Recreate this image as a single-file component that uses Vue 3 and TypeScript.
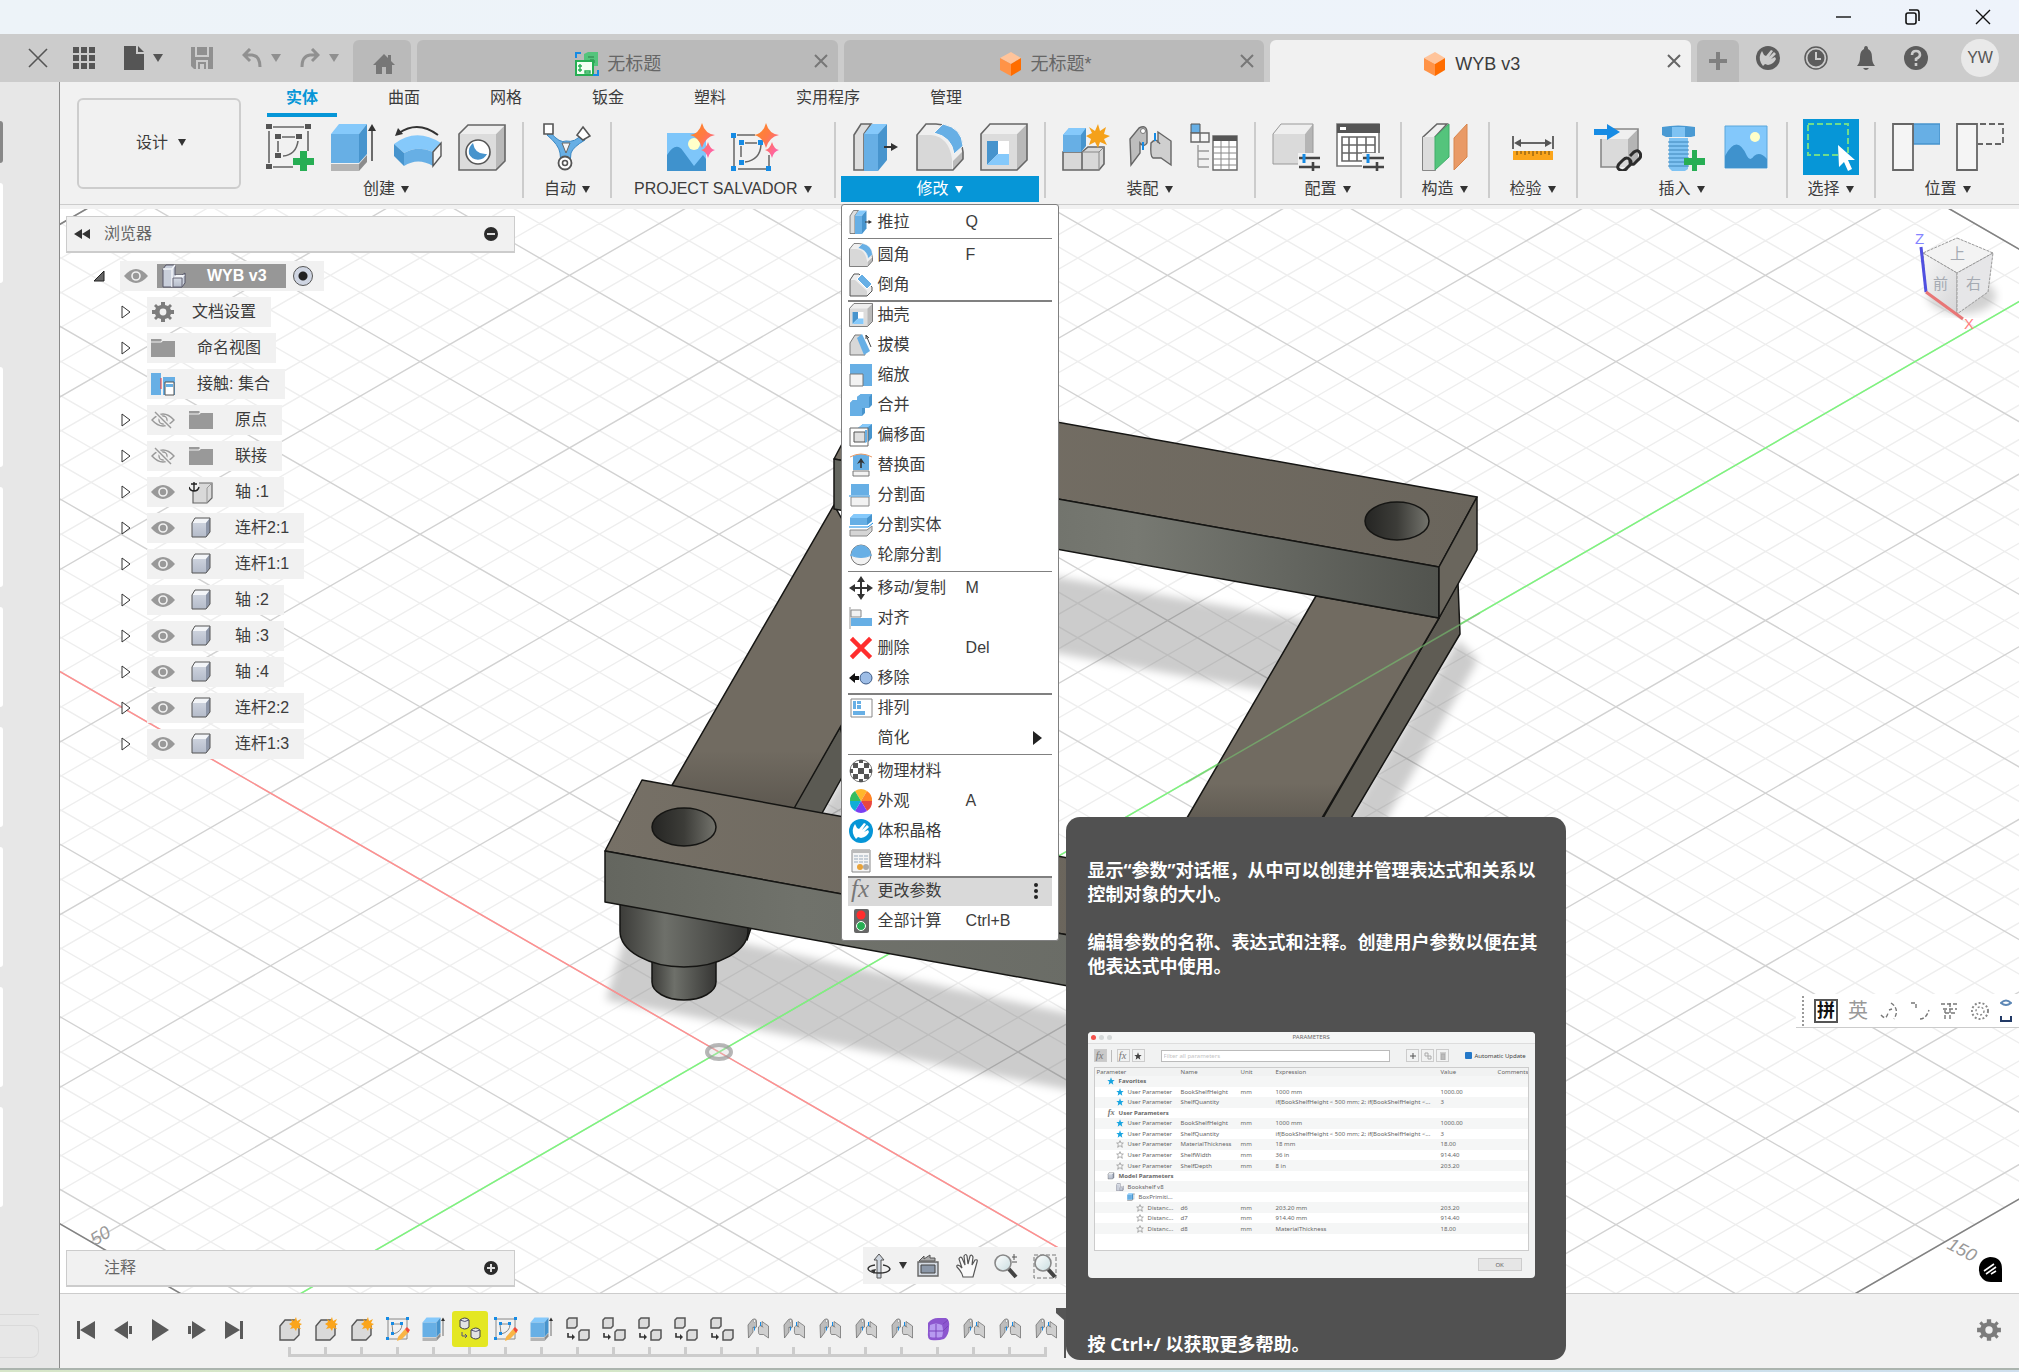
<script setup lang="ts">
interface Group { label: string; icons: string[]; active?: boolean; picked?: boolean; roomy?: boolean }
interface MenuItem { label: string; icon?: string; key?: string; rule?: 'thin' | 'thick'; more?: boolean; sub?: boolean; hot?: boolean }
interface Node { label: string; icon: string; eye?: 'on' | 'off'; leaf?: boolean }
interface Param { kind: string; level: number; mark: string; name?: string; unit?: string; expr?: string; value?: string; head?: boolean }

const tabs = ['实体', '曲面', '网格', '钣金', '塑料', '实用程序', '管理']

const groups: Group[] = [
  { label: '创建', icons: ['sketch', 'extrude', 'revolve', 'hole'] },
  { label: '自动', icons: ['auto'] },
  { label: 'PROJECT SALVADOR', icons: ['aiimage', 'aisketch'], roomy: true },
  { label: '修改', icons: ['presspull', 'fillet', 'shell'], active: true },
  { label: '装配', icons: ['component', 'joint', 'bom'] },
  { label: '配置', icons: ['config', 'configtable'] },
  { label: '构造', icons: ['plane'] },
  { label: '检验', icons: ['measure'] },
  { label: '插入', icons: ['derive', 'bolt', 'image'] },
  { label: '选择', icons: ['select'], picked: true },
  { label: '位置', icons: ['capture', 'revert'] },
]

const menu: MenuItem[] = [
  { label: '推拉', icon: 'presspull', key: 'Q' },
  { label: '圆角', icon: 'fillet', key: 'F', rule: 'thin' },
  { label: '倒角', icon: 'chamfer' },
  { label: '抽壳', icon: 'shell', rule: 'thick' },
  { label: '拔模', icon: 'draft' },
  { label: '缩放', icon: 'scale' },
  { label: '合并', icon: 'combine' },
  { label: '偏移面', icon: 'offset' },
  { label: '替换面', icon: 'replace' },
  { label: '分割面', icon: 'splitface' },
  { label: '分割实体', icon: 'splitbody' },
  { label: '轮廓分割', icon: 'silhouette' },
  { label: '移动/复制', icon: 'move', key: 'M', rule: 'thin' },
  { label: '对齐', icon: 'align' },
  { label: '删除', icon: 'delete', key: 'Del' },
  { label: '移除', icon: 'remove' },
  { label: '排列', icon: 'arrange', rule: 'thick' },
  { label: '简化', sub: true },
  { label: '物理材料', icon: 'material', rule: 'thin' },
  { label: '外观', icon: 'appearance', key: 'A' },
  { label: '体积晶格', icon: 'lattice' },
  { label: '管理材料', icon: 'manage' },
  { label: '更改参数', icon: 'fx', rule: 'thick', more: true, hot: true },
  { label: '全部计算', icon: 'compute', key: 'Ctrl+B' },
]

const nodes: Node[] = [
  { label: '文档设置', icon: 'gear' },
  { label: '命名视图', icon: 'folder' },
  { label: '接触: 集合', icon: 'contact', leaf: true },
  { label: '原点', icon: 'folder', eye: 'off' },
  { label: '联接', icon: 'folder', eye: 'off' },
  { label: '轴 :1', icon: 'anchor', eye: 'on' },
  { label: '连杆2:1', icon: 'body', eye: 'on' },
  { label: '连杆1:1', icon: 'body', eye: 'on' },
  { label: '轴 :2', icon: 'body', eye: 'on' },
  { label: '轴 :3', icon: 'body', eye: 'on' },
  { label: '轴 :4', icon: 'body', eye: 'on' },
  { label: '连杆2:2', icon: 'body', eye: 'on' },
  { label: '连杆1:3', icon: 'body', eye: 'on' },
]

const steps = [
  'newcomp', 'newcomp', 'newcomp', 'editsketch', 'extrude', 'copybody', 'editsketch', 'extrude',
  'paste', 'paste', 'paste', 'paste', 'paste',
  'joint', 'joint', 'joint', 'joint', 'joint', 'form', 'joint', 'joint', 'joint',
]

const longExpr = 'if(BookShelfHeight < 500 mm; 2; if(BookShelfHeight <...'
const params: Param[] = [
  { kind: 'Favorites', level: 0, mark: 'star', head: true },
  { kind: 'User Parameter', level: 1, mark: 'star', name: 'BookShelfHeight', unit: 'mm', expr: '1000 mm', value: '1000.00' },
  { kind: 'User Parameter', level: 1, mark: 'star', name: 'ShelfQuantity', expr: longExpr, value: '3' },
  { kind: 'User Parameters', level: 0, mark: 'fx', head: true },
  { kind: 'User Parameter', level: 1, mark: 'star', name: 'BookShelfHeight', unit: 'mm', expr: '1000 mm', value: '1000.00' },
  { kind: 'User Parameter', level: 1, mark: 'star', name: 'ShelfQuantity', expr: longExpr, value: '3' },
  { kind: 'User Parameter', level: 1, mark: 'staroff', name: 'MaterialThickness', unit: 'mm', expr: '18 mm', value: '18.00' },
  { kind: 'User Parameter', level: 1, mark: 'staroff', name: 'ShelfWidth', unit: 'mm', expr: '36 in', value: '914.40' },
  { kind: 'User Parameter', level: 1, mark: 'staroff', name: 'ShelfDepth', unit: 'mm', expr: '8 in', value: '203.20' },
  { kind: 'Model Parameters', level: 0, mark: 'body', head: true },
  { kind: 'Bookshelf v8', level: 1, mark: 'assembly' },
  { kind: 'BoxPrimiti...', level: 2, mark: 'extrude' },
  { kind: 'Distanc...', level: 3, mark: 'staroff', name: 'd6', unit: 'mm', expr: '203.20 mm', value: '203.20' },
  { kind: 'Distanc...', level: 3, mark: 'staroff', name: 'd7', unit: 'mm', expr: '914.40 mm', value: '914.40' },
  { kind: 'Distanc...', level: 3, mark: 'staroff', name: 'd8', unit: 'mm', expr: 'MaterialThickness', value: '18.00' },
]

// Isometric ground grid: i and j count minor cells away from the origin.
const gx = (i: number, j: number): string => (719 + 29.9 * (i - j)).toFixed(1)
const gy = (i: number, j: number): string => (1052 + 17.26 * (i + j)).toFixed(1)
const iMin = -35, iMax = 26, jMin = -45, jMax = 16
const seg = (i1: number, j1: number, i2: number, j2: number): string =>
  `M${gx(i1, j1)} ${gy(i1, j1)}L${gx(i2, j2)} ${gy(i2, j2)}`
let minor = ''
let major = ''
for (let i = iMin; i <= iMax; i++) {
  if (i % 5 === 0) major += seg(i, jMin, i, jMax)
  else minor += seg(i, jMin, i, jMax)
}
for (let j = jMin; j <= jMax; j++) {
  if (j % 5 === 0) major += seg(iMin, j, iMax, j)
  else minor += seg(iMin, j, iMax, j)
}
const border = seg(iMin, jMin, iMax, jMin) + seg(iMax, jMin, iMax, jMax) + seg(iMax, jMax, iMin, jMax) + seg(iMin, jMax, iMin, jMin)
const xAxis = seg(iMin, 0, iMax, 0)
const yAxis = seg(0, jMin, 0, jMax)
</script>

<template>
  <svg class="sprite" aria-hidden="true">
    <defs>
      <linearGradient id="gBody" x1="0" y1="0" x2="0" y2="1"><stop offset="0" stop-color="#d5dae4" /><stop offset="1" stop-color="#b4bbc9" /></linearGradient>
      <linearGradient id="gSpark" x1="0" y1="0" x2="1" y2="1"><stop offset="0" stop-color="#ff8a1f" /><stop offset=".45" stop-color="#ff7a45" /><stop offset="1" stop-color="#ff5bc8" /></linearGradient>
      <linearGradient id="gGlass" x1="0" y1="0" x2="1" y2="1"><stop offset="0" stop-color="#fff" /><stop offset="1" stop-color="#c9dde0" /></linearGradient>

      <symbol id="sketch" viewBox="0 0 48 48">
        <path d="M7 4H38M3 8V40M42 8V28M7 44H27M16 14H29M12 18V29M32 18Q30 32 17 33" fill="none" stroke="#666" stroke-width="1.6" />
        <path d="M0 1H6V6H0ZM39 1H45V6H39ZM0 41H6V46H0ZM9 11H15V16H9ZM30 11H36V16H30ZM9 30H15V35H9Z" fill="#555" />
        <path d="M34 28H41V35H48V42H41V48H34V42H27V35H34Z" fill="#27ae54" />
      </symbol>
      <symbol id="extrude" viewBox="0 0 48 48">
        <path d="M1 41H29V48H1Z" fill="#b4b4b4" /><path d="M29 41L37 32V39L29 48Z" fill="#8c8c8c" />
        <path d="M1 11L9 1H37L29 11Z" fill="#85c9fb" /><path d="M1 11H29V40H1Z" fill="#67afe5" /><path d="M29 11L37 1V31L29 40Z" fill="#4794cd" />
        <path d="M42 6V38" stroke="#333" stroke-width="1.4" /><path d="M42 1L46 8H38Z" fill="#333" />
      </symbol>
      <symbol id="revolve" viewBox="0 0 48 48">
        <path d="M0 21Q22 4 47 20L39 29Q24 22 10 30Z" fill="#85c9fb" /><path d="M10 30Q24 22 39 29V43Q24 34 10 43Z" fill="#67afe5" />
        <path d="M0 21L10 30V43L0 33Z" fill="#4794cd" /><path d="M39 29L47 20V33L39 43Z" fill="#f5f5f5" stroke="#555" stroke-width="1.4" />
        <path d="M5 10Q24 -3 44 12" fill="none" stroke="#333" stroke-width="2" /><path d="M1 13L4 5L9 11Z" fill="#333" />
      </symbol>
      <symbol id="hole" viewBox="0 0 48 48">
        <path d="M1 11L10 2H47V38L38 47H1Z" fill="#dcdcdc" /><path d="M38 11L47 2V38L38 47Z" fill="#b9b9b9" /><path d="M1 11L10 2H47L38 11Z" fill="#efefef" />
        <path d="M1 11L10 2H47V38L38 47H1Z" fill="none" stroke="#666" stroke-width="1.6" /><circle cx="20" cy="29" r="12" fill="#fff" stroke="#555" stroke-width="1.6" />
        <path d="M15 20Q17 32 29 31A10 10 0 0 1 11 31Q10 24 15 20Z" fill="#4794cd" />
      </symbol>
      <symbol id="auto" viewBox="0 0 48 48">
        <path d="M7 9Q17 21 23 18Q32 20 39 11L42 17Q30 24 28 30L27 40H18L17 30Q16 22 4 12Z" fill="#67afe5" stroke="#3a88c4" /><path d="M19 20H27L23 30Z" fill="#f5f5f5" stroke="#666" />
        <path d="M1 1H10V11H1Z" fill="#fff" stroke="#555" stroke-width="1.6" /><path d="M40 4L47 13L40 17L34 12Z" fill="#fff" stroke="#555" stroke-width="1.6" />
        <circle cx="22" cy="40" r="6.5" fill="#fff" stroke="#555" stroke-width="1.8" /><circle cx="22" cy="40" r="2.5" fill="none" stroke="#555" stroke-width="1.6" />
      </symbol>
      <symbol id="aiimage" viewBox="0 0 48 48">
        <path d="M0 10H39V48H0Z" fill="#7ec6fa" /><path d="M0 32Q9 18 16 28L27 43L36 32L39 36V48H0Z" fill="#3f92cd" /><circle cx="27" cy="21" r="6" fill="#ffffc9" />
        <path d="M35 0Q38 11 48 12Q38 14 35 25Q32 14 23 12Q32 11 35 0ZM41 19Q43 26 48 27Q43 28 41 35Q39 28 34 27Q39 26 41 19Z" fill="url(#gSpark)" />
      </symbol>
      <symbol id="aisketch" viewBox="0 0 48 48">
        <path d="M6 12H24M3 15V43M38 32V43M7 46H35M14 20H26M10 23V34M30 22Q29 37 14 39" fill="none" stroke="#666" stroke-width="1.5" />
        <path d="M0 10H5V15H0ZM8 17H13V22H8ZM27 17H32V22H27ZM8 37H13V42H8ZM0 43H5V48H0ZM35 43H40V48H35Z" fill="#168be4" />
        <path d="M35 0Q38 11 48 12Q38 14 35 25Q32 14 23 12Q32 11 35 0ZM41 19Q43 26 48 27Q43 28 41 35Q39 28 34 27Q39 26 41 19Z" fill="url(#gSpark)" />
      </symbol>
      <symbol id="presspull" viewBox="0 0 48 48">
        <path d="M2 12L9 1H19L12 11V47H2Z" fill="#dedede" stroke="#666" stroke-width="1.6" /><path d="M12 11L20 1H35L26 11Z" fill="#85c9fb" /><path d="M12 11H26V48H12Z" fill="#67afe5" /><path d="M26 11L35 1V37L26 48Z" fill="#4794cd" />
        <path d="M32 24H41" stroke="#333" stroke-width="2" /><path d="M39 20L46 24L39 28Z" fill="#333" />
      </symbol>
      <symbol id="fillet" viewBox="0 0 48 48">
        <path d="M1 12L10 1H20Q44 2 47 29V36L37 47H1Z" fill="#efefef" /><path d="M1 12H15Q33 14 36 36V47H1Z" fill="#d8d8d8" /><path d="M37 38L47 28V36L37 47Z" fill="#bbb" />
        <path d="M1 12L10 1H20Q44 2 47 29V36L37 47H1Z" fill="none" stroke="#666" stroke-width="1.6" /><path d="M27 1Q46 5 47 23L38 31Q36 14 18 10Z" fill="#67afe5" stroke="#f5f5f5" />
      </symbol>
      <symbol id="shell" viewBox="0 0 48 48">
        <path d="M1 11L10 1H47V37L37 47H1Z" fill="#dcdcdc" /><path d="M37 11L47 1V37L37 47Z" fill="#b9b9b9" /><path d="M1 11L10 1H47L37 11Z" fill="#efefef" />
        <path d="M1 11L10 1H47V37L37 47H1Z" fill="none" stroke="#666" stroke-width="1.6" /><path d="M7 18H29V42H7Z" fill="#fff" /><path d="M7 18H18V31L7 42Z" fill="#4794cd" /><path d="M7 42L18 31H29V42Z" fill="#85c9fb" />
      </symbol>
      <symbol id="component" viewBox="0 0 48 48">
        <path d="M1 29H20V47H1ZM20 29L26 24H42V41L37 47H20Z" fill="#d8d8d8" stroke="#666" stroke-width="1.6" /><path d="M20 29H37V47M37 29L42 24" fill="none" stroke="#888" />
        <path d="M1 12L7 5H24V22L19 29H1Z" fill="#67afe5" /><path d="M1 12L7 5H24L19 12Z" fill="#85c9fb" /><path d="M19 12L24 5V23L19 29Z" fill="#4794cd" />
        <path d="M36 1L38 8L44 4L42 11L48 13L42 16L45 22L38 19L36 25L33 19L27 22L29 16L24 13L30 10L27 4L33 8Z" fill="#f5a11a" />
      </symbol>
      <symbol id="joint" viewBox="0 0 48 48">
        <path d="M4 16L13 5Q21 1 21 10V20Q18 25 14 20V30L5 42Z" fill="#bdbdbd" stroke="#666" stroke-width="1.4" /><path d="M32 20V9L45 18V42L35 35H27Q24 34 25 20Q30 14 34 21" fill="#cfcfcf" stroke="#666" stroke-width="1.4" />
        <circle cx="17" cy="8" r="2.5" fill="#fff" stroke="#777" /><path d="M17 19V27M29 10V18" stroke="#168be4" stroke-width="2" />
      </symbol>
      <symbol id="bom" viewBox="0 0 48 48">
        <path d="M1 1H10V10H1Z" fill="#67afe5" stroke="#555" /><path d="M1 10H10V19H1ZM10 10H19V19H10Z" fill="#f5f5f5" stroke="#666" stroke-width="1.4" /><path d="M8 22V44M8 28H19M8 36H19M8 44H19" fill="none" stroke="#999" stroke-width="1.4" />
        <path d="M23 13H47V47H23Z" fill="#fff" stroke="#666" stroke-width="1.4" /><path d="M23 13H47V18H23Z" fill="#555" /><path d="M23 24H47M23 30H47M23 36H47M23 42H47M31 18V47M39 18V47" stroke="#888" />
      </symbol>
      <symbol id="config" viewBox="0 0 48 48">
        <path d="M1 11L9 1H41V32L33 41H1Z" fill="#dadada" /><path d="M33 11L41 1V32L33 41Z" fill="#b5b5b5" /><path d="M1 11L9 1H41L33 11Z" fill="#efefef" /><path d="M1 11L9 1H41V32L33 41H1Z" fill="none" stroke="#999" />
        <path d="M26 30H48V48H26Z" fill="#f1f1f1" /><path d="M27 35H48M27 44H48M41 39V48" stroke="#444" stroke-width="2.6" /><path d="M32 31V40" stroke="#168be4" stroke-width="3" />
      </symbol>
      <symbol id="configtable" viewBox="0 0 48 48">
        <path d="M1 1H43V43H1Z" fill="#fff" stroke="#777" stroke-width="1.6" /><path d="M1 1H44V10H1Z" fill="#555" /><path d="M4 4H10V7H4Z" fill="#fff" /><path d="M6 14H39V38H6ZM6 22H39M6 30H39M13 14V38M21 14V38M30 14V38" fill="none" stroke="#666" stroke-width="1.6" />
        <path d="M26 30H48V48H26Z" fill="#f1f1f1" /><path d="M27 35H48M27 44H48M41 39V48" stroke="#444" stroke-width="2.6" /><path d="M32 31V40" stroke="#168be4" stroke-width="3" />
      </symbol>
      <symbol id="plane" viewBox="0 0 48 48">
        <path d="M2 14L16 1H26L14 14V47H2Z" fill="#f0f0f0" stroke="#666" stroke-width="1.6" /><path d="M2 14H14V47H2Z" fill="#dcdcdc" /><path d="M14 14L28 1V34L14 47Z" fill="#54c47c" stroke="#3fae68" /><path d="M33 15L46 1V34L33 47Z" fill="#e99a66" stroke="#d8864e" />
      </symbol>
      <symbol id="measure" viewBox="0 0 48 48">
        <path d="M4 13V26M44 13V26M8 20H40" stroke="#666" stroke-width="2" /><path d="M5 20L12 16V24ZM43 20L36 16V24Z" fill="#555" /><path d="M4 28H44V37H4Z" fill="#fba51b" />
        <path d="M8 28V32M12 28V31M16 28V32M20 28V31M24 28V33M28 28V31M32 28V32M36 28V31M40 28V32" stroke="#6b4a10" />
      </symbol>
      <symbol id="derive" viewBox="0 0 48 48">
        <path d="M7 16L16 6H44V37L34 44H7Z" fill="#dadada" /><path d="M34 16L44 6V37L34 44Z" fill="#b5b5b5" /><path d="M7 16L16 6H44L34 16Z" fill="#efefef" /><path d="M7 16V44H24M18 6H44V28" fill="none" stroke="#888" stroke-width="1.6" />
        <path d="M0 6H13V1L26 9L13 17V12H0Z" fill="#168be4" /><path d="M36 33L40 29Q44 26 46 30Q48 34 44 37L40 41Q36 42 36 38M36 37Q33 33 29 37L25 41Q22 45 26 47Q30 49 33 45L36 42Q38 38 36 37" fill="none" stroke="#2c2c2c" stroke-width="3" />
      </symbol>
      <symbol id="bolt" viewBox="0 0 48 48">
        <path d="M4 4Q20 1 37 4V13L33 14H8L4 12Z" fill="#4a9ad3" /><path d="M14 4H27V14H14Z" fill="#7fc3f3" /><path d="M11 15H30V46L27 48H14L11 45Z" fill="#7fc3f3" /><path d="M10 19H31M10 23H31M10 27H31M10 31H31M10 35H31M10 39H31M10 43H31" stroke="#3f86ba" />
        <path d="M34 27H39V35H47V42H39V49H34V42H26V35H34Z" fill="#27ae54" />
      </symbol>
      <symbol id="image" viewBox="0 0 48 48">
        <path d="M3 3H45V45H3Z" fill="#83c8fb" stroke="#5aa6db" /><path d="M3 33Q15 10 25 33Q28 39 32 33Q38 28 45 36V45H3Z" fill="#3f92cd" /><circle cx="33" cy="14" r="5" fill="#ffffc9" />
      </symbol>
      <symbol id="select" viewBox="0 0 48 48">
        <path d="M1 1H41V32H1Z" fill="none" stroke="#6fdc8c" stroke-width="2" stroke-dasharray="6 3" /><path d="M31 22L32 44L37 39L41 48L45 46L41 37L48 37Z" fill="#fff" />
      </symbol>
      <symbol id="capture" viewBox="0 0 48 48"><path d="M21 1H48V21H21Z" fill="#67afe5" stroke="#4794cd" stroke-width="1.4" /><path d="M1 1H21V47H1Z" fill="#f5f5f5" stroke="#666" stroke-width="1.8" /></symbol>
      <symbol id="revert" viewBox="0 0 48 48"><path d="M1 1H21V47H1Z" fill="#f5f5f5" stroke="#666" stroke-width="1.8" /><path d="M24 1H47V21H22" fill="none" stroke="#666" stroke-width="1.8" stroke-dasharray="6 3" /></symbol>

      <symbol id="chamfer" viewBox="0 0 24 24"><path d="M1 7L5 1H10L23 14V18L18 23H1Z" fill="#eee" /><path d="M1 7H6L18 18V23H1Z" fill="#d5d5d5" /><path d="M1 7L5 1H10L23 14V18L18 23H1Z" fill="none" stroke="#555" /><path d="M13 1L23 11L18 16L8 6Z" fill="#67afe5" stroke="#fff" /></symbol>
      <symbol id="draft" viewBox="0 0 24 24"><path d="M1 10L6 2H12L16 22H1Z" fill="#d8d8d8" stroke="#777" /><path d="M8 5L13 1L21 18L15 22Z" fill="#67afe5" /><path d="M17 2L22 14M17 2L20 5M17 2V6" fill="none" stroke="#444" /></symbol>
      <symbol id="scale" viewBox="0 0 24 24"><path d="M1 1H23V23H14V11H1Z" fill="#67afe5" /><path d="M1 11H14V23H1Z" fill="#f2f2f2" stroke="#777" /></symbol>
      <symbol id="combine" viewBox="0 0 24 24"><path d="M1 10L4 7H8V4L12 1H23V12L20 15H16V20L13 23H1Z" fill="#4794cd" /><path d="M8 4L12 1H23L20 4V15H13V23H1V10L4 7H8Z" fill="#67afe5" /></symbol>
      <symbol id="offset" viewBox="0 0 24 24"><path d="M9 5L14 1H23V15L18 20V5Z" fill="#4794cd" /><path d="M9 5L14 1H23L18 5Z" fill="#85c9fb" /><path d="M1 5H19V23H1Z" fill="#fff" stroke="#666" /><path d="M5 9H16V19H5Z" fill="#e0e0e0" stroke="#555" /><path d="M16 7H18V19L16 20Z" fill="#67afe5" /></symbol>
      <symbol id="replace" viewBox="0 0 24 24"><path d="M4 3Q12 -1 20 3V17H4Z" fill="#67afe5" /><path d="M1 4Q12 -2 23 4" fill="none" stroke="#e99a66" /><path d="M4 18H20V23H4Z" fill="#f2f2f2" stroke="#777" /><path d="M12 15V8" stroke="#333" stroke-width="1.6" /><path d="M12 5L16 11L12 9L8 11Z" fill="#333" /></symbol>
      <symbol id="splitface" viewBox="0 0 24 24"><path d="M2 1H20V12H2Z" fill="#67afe5" /><path d="M2 14H20V23H2Z" fill="#f2f2f2" stroke="#888" /><path d="M0 13H21" stroke="#67afe5" stroke-width="1.5" /></symbol>
      <symbol id="splitbody" viewBox="0 0 24 24"><path d="M1 5L5 1H23V8L18 12H1Z" fill="#67afe5" /><path d="M18 5L23 1V8L18 12Z" fill="#4794cd" /><path d="M1 5L5 1H23L18 5Z" fill="#85c9fb" /><path d="M1 17H18L23 13V18L18 23H1Z" fill="#d5d5d5" stroke="#888" /><path d="M0 14H19L24 10" fill="none" stroke="#168be4" /></symbol>
      <symbol id="silhouette" viewBox="0 0 24 24"><circle cx="12" cy="12" r="10" fill="#f2f2f2" stroke="#777" /><path d="M2 12A10 10 0 0 1 22 12Q12 17 2 12Z" fill="#67afe5" /><path d="M1 12Q12 17 23 12" fill="none" stroke="#67afe5" /></symbol>
      <symbol id="move" viewBox="0 0 24 24"><path d="M12 3V21M3 12H21" stroke="#333" stroke-width="2" /><path d="M12 0L16 6H8ZM12 24L16 18H8ZM0 12L6 8V16ZM24 12L18 8V16Z" fill="#333" /></symbol>
      <symbol id="align" viewBox="0 0 24 24"><path d="M1 1V23" stroke="#999" /><path d="M2 4H12V11H2Z" fill="#f2f2f2" stroke="#888" /><path d="M2 12H23V20H2Z" fill="#67afe5" /></symbol>
      <symbol id="delete" viewBox="0 0 24 24"><path d="M4 4L20 20M20 4L4 20" stroke="#ff2d2d" stroke-width="4.5" stroke-linecap="square" /></symbol>
      <symbol id="remove" viewBox="0 0 24 24"><circle cx="17" cy="12" r="6" fill="#9dbde6" stroke="#3c5a86" /><path d="M0 12L6 7V10H10V14H6V17Z" fill="#111" /></symbol>
      <symbol id="arrange" viewBox="0 0 24 24"><path d="M2 3H23V21H2Z" fill="#fff" stroke="#888" /><path d="M4 5H7V13H4ZM8 5H12V8H8ZM8 9H12V13H8ZM4 15H16V19H4Z" fill="#67afe5" /></symbol>
      <symbol id="material" viewBox="0 0 24 24"><circle cx="12" cy="12" r="11" fill="#fff" stroke="#777" /><path d="M9 9H15V15H9ZM4 4H9V9H4ZM15 4H20V9H15ZM4 15H9V20H4ZM15 15H20V20H15ZM10 1H14V4H10ZM10 20H14V23H10ZM1 10H4V14H1ZM20 10H23V14H20Z" fill="#555" /></symbol>
      <symbol id="appearance" viewBox="0 0 24 24"><path d="M12 12L6 2A11 11 0 0 1 18 2Z" fill="#ffb62b" /><path d="M12 12L18 2A11 11 0 0 1 23 12Z" fill="#ff8426" /><path d="M12 12H23A11 11 0 0 1 18 22Z" fill="#e9463f" /><path d="M12 12L18 22A11 11 0 0 1 6 22Z" fill="#7a3ff2" /><path d="M12 12L6 22A11 11 0 0 1 1 12Z" fill="#10aed6" /><path d="M12 12H1A11 11 0 0 1 6 2Z" fill="#36bd5f" /></symbol>
      <symbol id="lattice" viewBox="0 0 24 24"><circle cx="12" cy="12" r="12" fill="#0696d7" /><path d="M5 17Q2 11 6 5L8 9L10 10L15 4L17 5L13 11L18 6L20 8L15 13L19 11L20 13Q18 18 12 19L9 18L7 20Z" fill="#fff" /></symbol>
      <symbol id="manage" viewBox="0 0 24 24"><path d="M3 1H21V23H3Z" fill="#f4f4f4" stroke="#888" /><path d="M3 1H21V4H3Z" fill="#bbb" /><path d="M5 7H19M5 10H19M5 13H19" stroke="#9ab" stroke-dasharray="4 1" /><circle cx="11" cy="18" r="3" fill="#e8a33a" /><circle cx="17" cy="18" r="3" fill="#aaa" /></symbol>
      <symbol id="fx" viewBox="0 0 24 24"><text x="2" y="18" font-family="Liberation Serif, serif" font-style="italic" font-size="25" fill="#777">fx</text></symbol>
      <symbol id="compute" viewBox="0 0 24 24"><rect x="5" y="0" width="15" height="24" rx="2" fill="#666" /><circle cx="12" cy="6" r="4.5" fill="#ff2d2d" /><circle cx="12" cy="17" r="4.5" fill="#27ae54" stroke="#fff" /></symbol>

      <symbol id="eye" viewBox="0 0 24 24"><path d="M0 12Q12 -2 24 12Q12 26 0 12Z" fill="#999" /><circle cx="12" cy="12" r="4" fill="#999" stroke="#f1f1f1" stroke-width="1.6" /></symbol>
      <symbol id="eyeoff" viewBox="0 0 24 24"><path d="M1 12Q12 0 23 12Q12 24 1 12Z" fill="none" stroke="#999" stroke-width="1.4" /><circle cx="12" cy="12" r="4" fill="none" stroke="#999" stroke-width="1.4" /><path d="M4 4L20 20" stroke="#f1f1f1" stroke-width="4" /><path d="M4 4L20 20" stroke="#999" stroke-width="1.4" /></symbol>
      <symbol id="folder" viewBox="0 0 24 24"><path d="M0 3H10L12 5H24V21H0Z" fill="#999" /><path d="M0 6H10L12 4" fill="none" stroke="#f1f1f1" stroke-width="1.2" /></symbol>
      <symbol id="gear" viewBox="0 0 24 24"><path d="M10 2H14V5L17 6L19 4L21 6L19 8L20 10H23V14H20L19 16L21 18L19 20L17 18L14 19V22H10V19L7 18L5 20L3 18L5 16L4 14H1V10H4L5 8L3 6L5 4L7 6L10 5Z" fill="#7c7c7c" /><circle cx="12" cy="12" r="3.4" fill="#f1f1f1" /></symbol>
      <symbol id="contact" viewBox="0 0 24 24"><path d="M0 1H10V23H0Z" fill="#67afe5" /><path d="M12 5H24V23H12Z" fill="#67afe5" /><path d="M10 6V17" stroke="#e33" /><path d="M14 10H23V23H14Z" fill="#fff" stroke="#555" /><path d="M15 12H22V15H15Z" fill="#67afe5" /></symbol>
      <symbol id="anchor" viewBox="0 0 24 24"><path d="M4 8L8 3H23V18L18 23H4Z" fill="#d9d9d9" stroke="#666" stroke-width="1.2" /><path d="M18 8L23 3M18 8V23" stroke="#999" /><path d="M0 0H10V10H0Z" fill="#f1f1f1" /><path d="M5 2V11M2 4H8M0 7Q1 11 5 11Q9 11 10 7" fill="none" stroke="#222" stroke-width="1.4" /></symbol>
      <symbol id="body" viewBox="0 0 24 24"><path d="M3 7L6 2H21V16L17 21H3Z" fill="url(#gBody)" /><path d="M3 7L6 2H21L17 7Z" fill="#f3f5f8" /><path d="M17 7L21 2V16L17 21Z" fill="#8d96a8" /><path d="M3 7L6 2H21V16L17 21H3Z" fill="none" stroke="#555" /></symbol>
      <symbol id="assembly" viewBox="0 0 24 24"><path d="M1 5L4 1H13V11H20L23 9V19L20 23H1Z" fill="#c9cfdb" stroke="#556" /><path d="M1 5H10V23M10 5L13 1" fill="none" stroke="#f4f6f9" stroke-width="1.4" /><path d="M11 14L14 11H23L20 14Z" fill="#f4f6f9" /><path d="M11 14H20V23H11Z" fill="url(#gBody)" stroke="#667" /></symbol>

      <symbol id="newcomp" viewBox="0 0 24 24"><path d="M2 9L7 3H17L21 8V18L16 23H2Z" fill="#d9d9d9" stroke="#555" stroke-width="1.4" /><path d="M18 0L19 4L23 2L21 6L24 7L21 9L23 12L19 11L18 14L16 11L12 12L14 9L11 7L14 5L13 2L16 4Z" fill="#fba51b" /></symbol>
      <symbol id="editsketch" viewBox="0 0 24 24"><path d="M2 2H21V22H2ZM6 7H16Q16 15 7 17Z" fill="none" stroke="#888" /><path d="M0 0H3V3H0ZM20 0H23V3H20ZM0 20H3V23H0ZM5 5H8V8H5ZM14 5H17V8H14ZM5 15H8V18H5Z" fill="#168be4" /><path d="M12 20L19 12L23 15L16 22L11 24Z" fill="#f9b546" /><path d="M19 12L21 10L24 13L22 16Z" fill="#f04a3c" /></symbol>
      <symbol id="copybody" viewBox="0 0 24 24"><path d="M2 3Q7 -1 11 3V10Q7 14 2 10ZM13 13Q18 9 22 13V20Q18 24 13 20Z" fill="#e3e3e3" stroke="#444" /><path d="M2 3Q7 6 11 3M13 13Q18 16 22 13M4 15V19H9M7 17L9 19L7 21" fill="none" stroke="#557" /></symbol>
      <symbol id="paste" viewBox="0 0 24 24"><path d="M1 3L3 1H11V9L9 11H1ZM13 15L15 13H23V21L21 23H13Z" fill="#dcdcdc" stroke="#555" stroke-width="1.5" /><path d="M2 16V20H6" fill="none" stroke="#333" stroke-width="1.6" /><path d="M6 17L9 20L6 23Z" fill="#333" /></symbol>
      <symbol id="form" viewBox="0 0 24 24"><path d="M2 6Q6 1 12 1H20Q24 3 23 10Q23 18 18 22Q12 24 5 23Q1 22 2 15Z" fill="#8c56cf" /><path d="M4 8Q10 5 16 8Q18 14 16 20Q9 21 4 20Q3 14 4 8Z" fill="#b79af0" /><path d="M10 7V21M3 14H17M17 7L22 3M17 14L22 9" stroke="#7a45bb" /></symbol>
      <symbol id="star" viewBox="0 0 24 24"><path d="M12 1L15 9H23L17 14L19 23L12 18L5 23L7 14L1 9H9Z" fill="#19a5e0" /></symbol>
      <symbol id="staroff" viewBox="0 0 24 24"><path d="M12 2L15 9H22L17 14L19 22L12 17L5 22L7 14L2 9H9Z" fill="none" stroke="#888" stroke-width="2" /></symbol>
      <symbol id="cube3" viewBox="0 0 24 24"><path d="M12 0L22 6L12 12L1 6Z" fill="#ffc49b" /><path d="M1 6L12 12V24L1 18Z" fill="#ff9347" /><path d="M22 6L12 12V24L22 18Z" fill="#ff6d00" /></symbol>
    </defs>
  </svg>

  <div class="app">
    <header class="titlebar">
      <button aria-label="最小化"><svg width="16" height="16"><path d="M1 8H16" stroke="#111" stroke-width="1.4" /></svg></button>
      <button aria-label="还原"><svg width="16" height="16"><rect x="1" y="4" width="10" height="11" rx="2" fill="none" stroke="#111" stroke-width="1.6" /><path d="M4 1H12Q14 1 14 4V12" fill="none" stroke="#111" stroke-width="1.6" /></svg></button>
      <button aria-label="关闭"><svg width="16" height="16"><path d="M1 1L15 15M15 1L1 15" stroke="#111" stroke-width="1.4" /></svg></button>
    </header>

    <nav class="filebar">
      <div class="quick">
        <button class="wide" aria-label="关闭面板"><svg width="22" height="22"><path d="M2 2L20 20M20 2L2 20" stroke="#555" stroke-width="1.6" /></svg></button>
        <button class="wide" aria-label="数据面板"><svg width="24" height="24" fill="#555"><path d="M1 1H7V7H1ZM9 1H15V7H9ZM17 1H23V7H17ZM1 9H7V15H1ZM9 9H15V15H9ZM17 9H23V15H17ZM1 17H7V23H1ZM9 17H15V23H9ZM17 17H23V23H17Z" /></svg></button>
        <button class="pair" aria-label="文件"><svg width="20" height="24" fill="#555"><path d="M0 0H12V8H20V24H0ZM14 0L20 6H14Z" /></svg><i class="caret big" /></button>
        <button class="save" aria-label="保存"><svg width="22" height="22"><path d="M0 0H22V22H3L0 19Z" fill="#909090" /><path d="M5 0V9H17V0M6 22V14H16V22" fill="none" stroke="#ccc" stroke-width="2" /><path d="M9 17H13V22H9Z" fill="#ccc" /></svg></button>
        <button class="pair dim" aria-label="撤消"><svg width="20" height="20"><path d="M8 1L2 7L8 13M2 7H10Q18 8 18 19" fill="none" stroke="#909090" stroke-width="3" /></svg><i class="caret big" /></button>
        <button class="pair dim" aria-label="恢复"><svg width="20" height="20"><path d="M12 1L18 7L12 13M18 7H10Q2 8 2 19" fill="none" stroke="#909090" stroke-width="3" /></svg><i class="caret big" /></button>
      </div>
      <button class="tab home" aria-label="主页"><svg width="24" height="22"><path d="M12 1L16 5V2H19V8L23 12H20V21H14V14H10V21H4V12H1Z" fill="#777" /></svg></button>
      <div class="tab">
        <a href="#">
          <svg width="24" height="24"><path d="M9 2L13 0H23V14H9Z" fill="#54c47c" /><path d="M13 5H19M15 8H19V11" fill="none" stroke="#2a7e49" /><path d="M1 9H18V23H1Z" fill="#f3fff3" stroke="#27ae54" stroke-width="2" /><path d="M5 12V20M3 14H7M3 18H7M10 19H15V21H10Z" stroke="#27ae54" stroke-width="1.4" fill="none" /><path d="M1 6V1H6M23 18V23H18" fill="none" stroke="#168be4" stroke-width="2" /></svg>无标题
        </a>
        <button aria-label="关闭"><svg width="14" height="14"><path d="M1 1L13 13M13 1L1 13" stroke="#777" stroke-width="2" /></svg></button>
      </div>
      <div class="tab">
        <a href="#"><svg width="24" height="24"><use href="#cube3" /></svg>无标题*</a>
        <button aria-label="关闭"><svg width="14" height="14"><path d="M1 1L13 13M13 1L1 13" stroke="#777" stroke-width="2" /></svg></button>
      </div>
      <div class="tab current">
        <a href="#"><svg width="24" height="24"><use href="#cube3" /></svg>WYB v3</a>
        <button aria-label="关闭"><svg width="14" height="14"><path d="M1 1L13 13M13 1L1 13" stroke="#666" stroke-width="2" /></svg></button>
      </div>
      <button class="tab add" aria-label="新建"><svg width="20" height="20"><path d="M10 1V19M1 10H19" stroke="#808080" stroke-width="4" /></svg></button>
      <div class="account">
        <button aria-label="扩展"><svg width="24" height="24"><circle cx="12" cy="12" r="12" fill="#5c5c5c" /><path d="M5 17Q2 11 6 5L8 9L10 10L15 4L17 5L13 11L18 6L20 8L15 13L19 11L20 13Q18 18 12 19L9 18L7 20Z" fill="#ccc" /></svg></button>
        <button aria-label="作业状态"><svg width="24" height="24"><circle cx="12" cy="12" r="11" fill="none" stroke="#5c5c5c" stroke-width="1.5" /><circle cx="12" cy="12" r="8.5" fill="#5c5c5c" /><path d="M12 6V13H17" fill="none" stroke="#ccc" stroke-width="2" /></svg></button>
        <button aria-label="通知"><svg width="24" height="24"><path d="M12 0Q14 0 14 3Q18 5 18 11Q18 17 21 20H3Q6 17 6 11Q6 5 10 3Q10 0 12 0ZM9 22H15Q12 26 9 22Z" fill="#5c5c5c" /></svg></button>
        <button aria-label="帮助"><svg width="24" height="24"><circle cx="12" cy="12" r="12" fill="#5c5c5c" /><path d="M8 9Q8 5 12 5Q16 5 16 9Q16 11 12 13V15M12 17V20" fill="none" stroke="#ccc" stroke-width="2.6" /></svg></button>
        <button class="avatar">YW</button>
      </div>
    </nav>

    <div class="body">
      <aside class="rail-left">
        <span class="peek dark" />
        <span class="peek" /><span class="peek gapped" /><span class="peek" /><span class="peek" /><span class="peek" /><span class="peek tall" /><span class="peek" /><span class="peek" />
        <div class="sidefoot"><span class="sidebox" /></div>
      </aside>

      <main>
        <section class="ribbon">
          <button class="workspace">设计<i class="caret" /></button>
          <div class="tools">
            <div class="rtabs">
              <a v-for="(t, n) in tabs" :key="t" href="#" :class="{ on: n === 0 }">{{ t }}</a>
            </div>
            <div class="groups">
              <template v-for="g in groups" :key="g.label">
                <div class="group" :class="{ active: g.active, picked: g.picked, roomy: g.roomy }">
                  <div class="icons">
                    <button v-for="ic in g.icons" :key="ic" :aria-label="ic"><svg width="48" height="48"><use :href="'#' + ic" /></svg></button>
                  </div>
                  <button class="glabel">{{ g.label }}<i class="caret" /></button>

                  <div v-if="g.active" class="menu">
                    <template v-for="m in menu" :key="m.label">
                      <hr v-if="m.rule === 'thin'">
                      <button class="item" :class="{ hot: m.hot, ruled: m.rule === 'thick' }">
                        <svg width="24" height="24"><use v-if="m.icon" :href="'#' + m.icon" /></svg>
                        <span class="name">{{ m.label }}</span>
                        <kbd>{{ m.key }}</kbd>
                        <svg v-if="m.sub" class="end" width="10" height="14"><path d="M0 0L9 7L0 14Z" fill="#222" /></svg>
                        <svg v-if="m.more" class="end dots" width="6" height="18"><circle cx="3" cy="3" r="2" /><circle cx="3" cy="9" r="2" /><circle cx="3" cy="15" r="2" /></svg>
                      </button>
                    </template>

                    <div class="tip" role="tooltip">
                      <p>显示“参数”对话框，从中可以创建并管理表达式和关系以控制对象的大小。</p>
                      <p>编辑参数的名称、表达式和注释。创建用户参数以便在其他表达式中使用。</p>
                      <div class="dialog">
                        <div class="dtitle"><span class="lights"><i /><i /><i /></span>PARAMETERS</div>
                        <div class="dbar">
                          <button class="pressed" aria-label="fx"><svg width="10" height="10"><use href="#fx" /></svg></button>
                          <span class="vsep" />
                          <button aria-label="user"><svg width="10" height="10"><use href="#fx" /></svg></button>
                          <button aria-label="favorites"><svg width="8" height="8" viewBox="0 0 24 24"><path d="M12 1L15 9H23L17 14L19 23L12 18L5 23L7 14L1 9H9Z" fill="#444" /></svg></button>
                          <input type="text" aria-label="filter" placeholder="Filter all parameters">
                          <button aria-label="add"><svg width="8" height="8"><path d="M4 1V7M1 4H7" stroke="#555" /></svg></button>
                          <button aria-label="copy"><svg width="8" height="8"><path d="M1 1H4V4H1ZM4 4H7V7H4Z" fill="none" stroke="#aaa" /></svg></button>
                          <button aria-label="remove"><svg width="8" height="8"><path d="M2 2H6V8H2ZM1 1H7" fill="#bbb" stroke="#aaa" /></svg></button>
                          <label><input type="checkbox" checked>Automatic Update</label>
                        </div>
                        <div class="dgrid">
                          <table>
                            <colgroup><col class="c1"><col class="c2"><col class="c3"><col class="c4"><col class="c5"><col></colgroup>
                            <thead><tr><th>Parameter</th><th>Name</th><th>Unit</th><th>Expression</th><th>Value</th><th>Comments</th></tr></thead>
                            <tbody>
                              <tr v-for="(p, n) in params" :key="n" :class="{ head: p.head }">
                                <td :class="'lv' + p.level"><svg width="8" height="8"><use :href="'#' + p.mark" /></svg>{{ p.kind }}</td>
                                <td>{{ p.name }}</td><td>{{ p.unit }}</td><td>{{ p.expr }}</td><td>{{ p.value }}</td><td />
                              </tr>
                            </tbody>
                          </table>
                        </div>
                        <button class="ok">OK</button>
                      </div>
                      <p class="more">按 Ctrl+/ 以获取更多帮助。</p>
                    </div>
                  </div>
                </div>
                <span class="divider" />
              </template>
            </div>
          </div>
        </section>

        <section class="viewport">
          <svg class="scene" viewBox="60 209 1959 1084" preserveAspectRatio="xMidYMid slice">
            <defs>
              <filter id="soft" x="-10%" y="-10%" width="120%" height="120%"><feGaussianBlur stdDeviation="4" /></filter>
              <linearGradient id="front" x1="0" y1="0" x2="1" y2="0"><stop offset="0" stop-color="#64665f" /><stop offset=".5" stop-color="#777972" /><stop offset="1" stop-color="#51534e" /></linearGradient>
              <linearGradient id="frontLow" x1="0" y1="0" x2="1" y2="0"><stop offset="0" stop-color="#64665f" /><stop offset=".4" stop-color="#70726b" /><stop offset="1" stop-color="#6a6c66" /></linearGradient>
              <linearGradient id="top" x1="0" y1="0" x2="1" y2="0"><stop offset="0" stop-color="#767066" /><stop offset="1" stop-color="#6a655c" /></linearGradient>
              <linearGradient id="link" x1="0" y1="0" x2="0" y2="1"><stop offset="0" stop-color="#716b61" /><stop offset=".8" stop-color="#716b61" /><stop offset="1" stop-color="#5c574f" /></linearGradient>
              <linearGradient id="cyl" x1="0" y1="0" x2="1" y2="0"><stop offset="0" stop-color="#3c3c39" /><stop offset=".35" stop-color="#6e706a" /><stop offset="1" stop-color="#363634" /></linearGradient>
              <linearGradient id="bore" x1="0" y1="0" x2="1" y2="0"><stop offset="0" stop-color="#252523" /><stop offset=".5" stop-color="#3c3c38" /><stop offset="1" stop-color="#74746d" /></linearGradient>
              <linearGradient id="cubeL" x1="0" y1="0" x2="1" y2="1"><stop offset="0" stop-color="#f7f7f7" /><stop offset="1" stop-color="#d6d6d8" /></linearGradient>
            </defs>
            <path :d="minor" stroke="#eee" fill="none" stroke-width="1.4" />
            <path :d="major" stroke="#d2d2d2" fill="none" stroke-width="1.4" />
            <path :d="border" stroke="#828282" fill="none" stroke-width="1.6" />
            <g fill="#000" fill-opacity=".2" filter="url(#soft)">
              <path d="M630 920L606 1000L1080 1092V1016L750 945Z" />
              <path d="M1040 574L1316 622L1272 692L1040 650Z" />
              <path d="M1458 640L1478 660L1380 830H1340Z" />
              <path d="M815 822L850 765V830Z" />
            </g>
            <path :d="xAxis" stroke="#ff8f8f" fill="none" stroke-width="1.5" />
            <path :d="yAxis" stroke="#7df57d" fill="none" stroke-width="1.5" />
            <ellipse cx="719" cy="1052" rx="12" ry="7" fill="#ccc" fill-opacity=".3" stroke="#999" stroke-opacity=".7" stroke-width="4" />

            <g stroke="#151513" stroke-width="1.5" stroke-linejoin="round">
              <path d="M840 727L793 808L821 815L850 763Z" fill="#5b5a53" />
              <path d="M834 505L671 787L792 812L900 622Z" fill="url(#link)" />
              <path d="M1439 618L1316 830H1344L1460 634L1458 583Z" fill="#5f5c54" />
              <path d="M1316 596L1180 830H1315L1439 618Z" fill="url(#link)" />
              <path d="M1186 783L1480 613" stroke="#76c46f" stroke-opacity=".6" />
              <path d="M834 459L871 389L1477 497L1439 567Z" fill="url(#top)" />
              <path d="M834 459L1439 567V618L834 509Z" fill="url(#front)" />
              <path d="M1439 567L1477 497V550L1439 618Z" fill="#6a665d" />
              <ellipse cx="1397" cy="521" rx="32" ry="19" fill="url(#bore)" />
              <path d="M735 910H752V925L747 940Z" fill="#333" />
              <path d="M652 950V982A32 18 0 0 0 716 982V950Z" fill="url(#cyl)" />
              <path d="M620 890V931A64 36 0 0 0 748 931V890Z" fill="url(#cyl)" />
              <path d="M605 851L642 780L1090 862V939Z" fill="url(#top)" />
              <path d="M605 851L1090 939V990L605 902Z" fill="url(#frontLow)" />
              <ellipse cx="684" cy="827" rx="32" ry="19" fill="url(#bore)" />
            </g>

            <ellipse cx="1962" cy="296" rx="34" ry="18" fill="#000" fill-opacity=".18" filter="url(#soft)" />
            <g stroke="#999" stroke-dasharray="3 1">
              <path d="M1957 238L1993 253L1957 273L1923 253Z" fill="#f3f3f3" />
              <path d="M1923 253L1957 273V314L1926 292Z" fill="url(#cubeL)" />
              <path d="M1993 253L1957 273V314L1988 292Z" fill="#e6e6e8" />
            </g>
            <path d="M1921 247L1926 292" stroke="#5050e0" stroke-width="3" /><path d="M1926 292L1963 319" stroke="#e87676" stroke-width="3" />
            <g class="cubetext"><text x="1950" y="259">上</text><text x="1933" y="289">前</text><text x="1966" y="289">右</text></g>
            <text class="axis" x="1915" y="244" fill="#8484ff">Z</text><text class="axis" x="1964" y="329" fill="#ff7f7f">X</text>
            <text class="scale" transform="translate(1946 1248) rotate(28)">150</text>
            <text class="scale" transform="translate(95 1246) rotate(-32)">50</text>
            <path d="M1979 1269A12 12 0 0 1 1990 1257Q2002 1257 2002 1269V1282H1991A12 12 0 0 1 1979 1269Z" fill="#000" /><path d="M1984 1271L1994 1264M1986 1274L1996 1267M1991 1274L1996 1271" stroke="#fff" stroke-width="1.6" />
          </svg>

          <div class="left-panels">
            <div class="browser">
              <div class="panelbar">
                <svg width="16" height="10"><path d="M8 0V10L0 5ZM16 0V10L8 5Z" fill="#333" /></svg>
                <span>浏览器</span>
                <button aria-label="折叠"><svg width="14" height="14"><circle cx="7" cy="7" r="7" fill="#2b2b2b" /><path d="M3 7H11" stroke="#ddd" stroke-width="2" /></svg></button>
              </div>
              <ul class="tree">
                <li class="root">
                  <svg class="arrow" width="12" height="12"><path d="M11 1V11H1Z" fill="#666" stroke="#222" /></svg>
                  <div class="chip">
                    <svg width="24" height="24"><use href="#eye" /></svg>
                    <span class="sel"><svg width="24" height="24"><use href="#assembly" /></svg>WYB v3</span>
                    <input type="radio" checked aria-label="激活 WYB v3">
                  </div>
                </li>
                <li v-for="(n, k) in nodes" :key="k">
                  <svg class="arrow" width="12" height="14"><path v-if="!n.leaf" d="M2 1L10 7L2 13Z" fill="#fff" stroke="#333" /></svg>
                  <div class="chip">
                    <svg v-if="n.eye" class="eyecell" width="24" height="24"><use :href="n.eye === 'on' ? '#eye' : '#eyeoff'" /></svg>
                    <svg width="24" height="24"><use :href="'#' + n.icon" /></svg>
                    <span :class="{ near: n.icon === 'gear' }">{{ n.label }}</span>
                  </div>
                </li>
              </ul>
            </div>
            <div class="panelbar comments">
              <span>注释</span>
              <button aria-label="展开"><svg width="14" height="14"><circle cx="7" cy="7" r="7" fill="#2b2b2b" /><path d="M3 7H11M7 3V11" stroke="#ddd" stroke-width="2" /></svg></button>
            </div>
          </div>

          <div class="navbar">
            <button aria-label="动态观察"><svg width="24" height="26"><path d="M10 25V7H7L12 1L17 7H14V25Z" fill="#cfd6df" stroke="#555" /><path d="M8 12Q1 13 1 16Q3 20 12 20Q22 20 23 16Q22 13 16 12" fill="none" stroke="#333" stroke-width="1.4" /><path d="M4 17L9 16L7 21Z" fill="#333" /></svg></button>
            <i class="caret" />
            <button aria-label="观察方向"><svg width="24" height="26"><path d="M2 9H22V23H2Z" fill="#d4dae2" stroke="#666" stroke-width="1.4" /><path d="M5 12H19V20H5Z" fill="#8b97a8" stroke="#444" /><path d="M3 8L8 3V6L14 2V5H19V8Z" fill="#aaa" stroke="#555" /></svg></button>
            <button aria-label="平移"><svg width="24" height="26"><path d="M8 24Q7 19 2 14Q1 11 5 13L7 15L4 6Q5 3 7 5L10 12L9 3Q11 0 12 3L13 11L15 3Q17 1 18 4L17 12L20 7Q23 6 22 9L18 24Z" fill="#fafafa" stroke="#555" stroke-width="1.2" /></svg></button>
            <button aria-label="缩放"><svg width="24" height="26"><path d="M14 15L22 24" stroke="#444" stroke-width="4" /><circle cx="9" cy="10" r="8" fill="url(#gGlass)" stroke="#888" stroke-width="1.6" /><path d="M18 4H23M20 1V7M18 9H23" stroke="#555" /></svg></button>
            <button aria-label="窗口缩放"><svg width="24" height="26"><path d="M1 2H23V25H1Z" fill="none" stroke="#777" stroke-dasharray="4 2" /><path d="M14 15L22 24" stroke="#444" stroke-width="4" /><circle cx="10" cy="10" r="8" fill="url(#gGlass)" stroke="#888" stroke-width="1.6" /></svg></button>
          </div>

          <div class="ime">
            <span class="grip" /><b>拼</b><span class="faint">英</span>
            <svg width="20" height="20"><path d="M1 14Q6 20 8 12M11 2Q20 8 14 18M9 9L12 8" fill="none" stroke="#777" stroke-dasharray="4 2" stroke-width="1.4" /></svg>
            <svg width="20" height="20"><path d="M1 2H6V7M10 18Q16 18 19 9" fill="none" stroke="#777" stroke-dasharray="4 2" stroke-width="1.4" /></svg>
            <svg width="20" height="20"><path d="M1 3H19M3 8H17M10 2V18M5 12H15M5 18V9" fill="none" stroke="#777" stroke-dasharray="4 2" stroke-width="1.4" /></svg>
            <svg width="20" height="20"><circle cx="10" cy="10" r="8" fill="none" stroke="#888" stroke-dasharray="2 2" stroke-width="2" /><circle cx="10" cy="10" r="4" fill="none" stroke="#888" stroke-dasharray="2 2" stroke-width="1.4" /></svg>
            <svg width="12" height="24"><path d="M1 4Q6 -1 11 4Q6 8 1 4Z" fill="none" stroke="#5d87b5" stroke-width="2" /><path d="M1 17V22H11V17" fill="none" stroke="#223a66" stroke-width="2" /></svg>
          </div>
        </section>

        <footer class="timeline">
          <div class="play">
            <button aria-label="起点"><svg width="20" height="20"><path d="M1 1H4V19H1ZM19 1V19L4 10Z" fill="#5a5a5a" /></svg></button>
            <button aria-label="后退"><svg width="20" height="20"><path d="M15 1V19L1 10ZM16 6H19V14H16Z" fill="#5a5a5a" /></svg></button>
            <button aria-label="播放"><svg width="20" height="22"><path d="M2 0V22L19 11Z" fill="#5a5a5a" /></svg></button>
            <button aria-label="前进"><svg width="20" height="20"><path d="M5 1V19L19 10ZM1 6H4V14H1Z" fill="#5a5a5a" /></svg></button>
            <button aria-label="终点"><svg width="20" height="20"><path d="M16 1H19V19H16ZM1 1V19L16 10Z" fill="#5a5a5a" /></svg></button>
          </div>
          <div class="track">
            <div class="steps">
              <button v-for="(s, k) in steps" :key="k" :class="{ lit: s === 'copybody' }" :aria-label="s"><svg width="24" height="24"><use :href="'#' + s" /></svg></button>
            </div>
            <div class="ticks"><span v-for="(s, k) in steps" :key="k" /></div>
          </div>
          <svg class="marker" width="20" height="50"><path d="M0 0H20L10 12V50H8V12L0 5Z" fill="#555" /></svg>
          <button class="prefs" aria-label="设置"><svg width="26" height="26"><use href="#gear" /></svg></button>
        </footer>
      </main>
    </div>
    <div class="desktop" />
  </div>
</template>

<style>
body { margin: 0; overflow: hidden; background: #f1f1f1; }
</style>

<style scoped>
* { box-sizing: border-box; }
.sprite { position: absolute; width: 0; height: 0; }
.app { display: flex; flex-direction: column; height: 100vh; overflow: hidden; font: 16px/20px "Liberation Sans", "Noto Sans CJK SC", sans-serif; color: #3c3c3c; background: #f1f1f1; }
button { margin: 0; padding: 0; border: 0; background: none; font: inherit; color: inherit; display: flex; align-items: center; justify-content: center; flex: none; }
a { color: inherit; text-decoration: none; }
svg { display: block; flex: none; }
.caret { flex: none; border: 4px solid transparent; border-top: 7px solid #333; border-bottom: 0; }
.caret.big { border-width: 8px 5px 0; border-top-color: #555; }

.titlebar { flex: none; height: 34px; display: flex; justify-content: flex-end; padding: 0 1px 1px 0; background: linear-gradient(90deg, #edf3f8, #eef3fb); }
.titlebar button { width: 70px; }

.filebar { flex: none; height: 48px; display: flex; gap: 6px; padding-top: 6px; background: #ccc; }
.quick { display: flex; width: 347px; align-items: center; padding: 0 0 7px 15px; }
.quick .wide { width: 46px; }
.quick .pair { gap: 9px; width: 56px; margin-left: 8px; }
.quick .dim { width: 44px; margin-left: 14px; }
.quick .dim .caret { border-top-color: #909090; }
.quick .save { width: 46px; margin: 0 0 0 8px; }
.tab { flex: 1; display: flex; align-items: center; background: #bababa; border-radius: 6px 6px 0 0; color: #666; font-size: 18px; padding-right: 8px; }
.tab a { flex: 1; display: flex; align-items: center; justify-content: center; gap: 8px; padding: 5px 0 0 8px; }
.tab button { width: 18px; height: 18px; }
.tab.current { background: #f1f1f1; color: #3c3c3c; }
.tab.home { flex: none; width: 58px; padding: 6px 0 0 4px; }
.tab.add { flex: none; width: 42px; padding: 0; }
.account { display: flex; align-items: center; padding: 0 20px 7px 0; }
.account button { width: 50px; }
.account button:first-child { width: 46px; }
.account .avatar { width: 38px; height: 38px; border-radius: 50%; background: #e9e9e9; margin-left: 20px; color: #555; }

.body { flex: 1; min-height: 0; display: flex; }
.rail-left { flex: none; width: 60px; border-right: 1px solid #8c8c8c; background: #e7e7e7; display: flex; flex-direction: column; padding-top: 39px; gap: 20px; }
.peek { flex: none; width: 3px; height: 100px; background: #fff; border-radius: 0 4px 4px 0; }
.peek.dark { height: 42px; background: #888; }
.peek.tall { height: 120px; }
.peek.gapped { margin-top: 64px; }
.sidefoot { margin-top: auto; width: 39px; border-top: 1px solid #d8d8d8; padding: 10px 0; }
.sidebox { display: block; height: 33px; border: 1px solid #dadada; border-left: 0; border-radius: 0 8px 8px 0; }
main { flex: 1; min-width: 0; display: flex; flex-direction: column; }

.ribbon { flex: none; height: 127px; display: flex; position: relative; z-index: 2; border-bottom: 4px solid #f1f1f1; background: linear-gradient(#ccc, #ccc) bottom / 100% 1px no-repeat #f1f1f1; }
.workspace { width: 164px; height: 91px; margin: 16px 9px 0 17px; padding: 0 0 2px 4px; border: 2px solid #cdcdcd; border-radius: 6px; gap: 10px; }
.tools { flex: 1; min-width: 0; }
.rtabs { display: flex; gap: 32px; height: 35px; padding-left: 17px; }
.rtabs a { padding: 6px 19px 0; border-bottom: 4px solid transparent; white-space: nowrap; }
.rtabs .on { color: #0696d7; border-color: #0696d7; font-weight: bold; }
.groups { display: flex; align-items: flex-start; }
.group { flex: none; min-width: 86px; padding: 6px 16px 0; display: flex; flex-direction: column; align-items: center; gap: 5px; position: relative; }
.group.roomy { padding: 6px 19px 0; }
.icons { display: flex; gap: 16px; }
.glabel { height: 26px; gap: 6px; white-space: nowrap; padding: 0 3px; }
.group.active .glabel { background: #0696d7; color: #fff; align-self: stretch; margin: 0 -11px; }
.group.active .caret { border-top-color: #fff; }
.group.picked .icons button { background: #0696d7; box-shadow: 0 0 0 4px #0696d7; }
.divider { flex: none; width: 2px; height: 76px; margin-top: 5px; background: #ccc; }
.divider:last-child { display: none; }

.menu { position: absolute; left: 5px; top: 87px; width: 218px; padding: 2px 6px 4px; background: #fff; border: 1px solid #808080; border-radius: 3px; }
.menu hr { margin: 1px 0; border: 0; height: 1px; background: #808080; }
.item { width: 204px; height: 30px; justify-content: flex-start; padding-left: 1px; text-align: left; }
.item.ruled { box-shadow: inset 0 2px #808080; }
.item.hot { background: #d9d9d9; }
.item .name { margin-left: 5px; width: 88px; white-space: nowrap; }
.item kbd { font: inherit; flex: 1; }
.item .end { margin-right: 9px; fill: #222; }
.item .dots { margin-right: 13px; }

.tip { position: absolute; left: 224px; top: 612px; width: 500px; height: 543px; padding: 41px 25px 4px 22px; background: #515151; border-radius: 14px; color: #fff; font: bold 18px/24px "Noto Sans", "Noto Sans CJK SC", sans-serif; display: flex; flex-direction: column; text-align: left; }
.tip p { margin: 0 0 24px; }
.tip .more { margin: auto 0 0; }
.dialog { width: 447px; height: 246px; margin-top: 30px; flex: none; background: #f1f2f2; border-radius: 4px; color: #666; font: 6px/8px "Noto Sans", sans-serif; display: flex; flex-direction: column; overflow: hidden; }
.dtitle { position: relative; height: 12px; text-align: center; line-height: 11px; border-bottom: 1px solid #ddd; background: #f5f6f6; }
.lights { position: absolute; left: 3px; top: 3px; display: flex; gap: 3px; }
.lights i { width: 5px; height: 5px; border-radius: 50%; background: #d4d8d8; }
.lights i:first-child { background: #f4514b; }
.dbar { height: 23px; display: flex; align-items: center; gap: 2px; padding: 0 9px 0 6px; }
.dbar button { width: 13px; height: 13px; border: 1px solid #ccc; }
.dbar .pressed { background: #c9c9c9; }
.vsep { width: 1px; height: 12px; background: #bbb; margin: 0 3px 0 2px; }
.dbar input[type=text] { flex: 1; height: 12px; margin: 0 14px; min-width: 0; padding: 0 2px; border: 1px solid #bbb; background: #fff; font: inherit; }
.dbar input::placeholder { color: #c4c4c4; }
.dbar label { display: flex; align-items: center; gap: 2px; margin-left: 14px; white-space: nowrap; color: #444; }
.dbar input[type=checkbox] { appearance: none; width: 7px; height: 7px; margin: 0; border-radius: 1px; background: #2478c8; }
.dgrid { height: 184px; margin: 0 6px; border: 1px solid #ccc; background: #fff; overflow: hidden; }
table { width: 100%; height: 166px; border-collapse: collapse; table-layout: fixed; }
.c1 { width: 84px; } .c2 { width: 60px; } .c3 { width: 35px; } .c4 { width: 165px; } .c5 { width: 57px; }
th, td { padding: 0 0 0 2px; text-align: left; font-weight: normal; line-height: 8px; white-space: nowrap; }
thead { background: #f1f2f2; }
tbody tr:nth-child(odd) { background: #f5f6f6; }
tr.head td { font-weight: bold; }
td svg { display: inline-block; vertical-align: top; margin-right: 4px; }
td.lv0 { padding-left: 12px; } td.lv1 { padding-left: 21px; } td.lv2 { padding-left: 32px; } td.lv3 { padding-left: 41px; }
.ok { width: 44px; height: 13px; margin: 7px 13px 0 auto; border: 1px solid #ccc; background: #e6e6e6; }

.viewport { flex: 1; min-height: 0; position: relative; background: #fff; overflow: hidden; }
.scene { position: absolute; inset: 0; width: 100%; height: 100%; }
.cubetext { font-size: 15px; fill: #a5aab2; }
.axis { font-size: 15px; }
.scale { font-size: 18px; font-style: italic; fill: #999; }
.left-panels { position: relative; height: 100%; width: 455px; padding: 7px 0 6px 6px; display: flex; flex-direction: column; justify-content: space-between; }
.panelbar { height: 37px; display: flex; align-items: center; padding: 0 16px 0 7px; background: #f1f1f1; border: 1px solid #ccc; border-bottom-width: 2px; color: #666; }
.panelbar span { flex: 1; margin-left: 14px; }
.comments span { margin-left: 30px; }
.tree { list-style: none; margin: 0; padding: 5px 0 0; }
.tree li { display: flex; align-items: center; height: 36px; padding-left: 54px; }
.tree .root { padding-left: 27px; }
.arrow { margin-right: 15px; }
.chip { display: flex; align-items: center; height: 30px; padding: 0 15px 0 4px; background: #f1f1f1; }
.root .chip { padding-right: 11px; }
.chip span { margin-left: 22px; white-space: nowrap; }
.chip .near { margin-left: 17px; }
.chip .eyecell { margin-right: 14px; }
.chip .sel { display: flex; align-items: center; gap: 21px; width: 129px; height: 24px; margin-left: 9px; padding-left: 5px; background: #979797; color: #fff; font-weight: bold; }
.chip input { appearance: none; width: 20px; height: 20px; margin: 0 0 0 7px; border: 1px solid #555; border-radius: 50%; background: radial-gradient(#222 0 4px, #cfd5e2 5px); }

.navbar { position: absolute; left: 803px; bottom: 9px; width: 230px; height: 37px; display: flex; align-items: center; gap: 15px; padding-left: 4px; background: #f1f1f1; }
.navbar .caret { margin: 0 -6px 0 -7px; }
.ime { position: absolute; right: 0; top: 785px; height: 34px; display: flex; align-items: center; gap: 10px; padding: 0 7px 0 6px; background: #fff; border-bottom: 1px solid #ccc; }
.grip { height: 30px; border-left: 2px dotted #999; }
.ime b { width: 24px; height: 24px; border: 2px solid #555; color: #111; font-size: 18px; line-height: 20px; text-align: center; }
.faint { width: 22px; color: #999; font-size: 20px; }

.timeline { flex: none; height: 75px; display: flex; align-items: flex-start; border-top: 1px solid #ccc; background: #f1f1f1; padding: 17px 17px 0 7px; }
.play { display: flex; height: 38px; margin-right: 20px; }
.play button { width: 37px; }
.steps { display: flex; }
.steps button { width: 36px; height: 36px; border-radius: 3px; }
.steps .lit { background: #e4e722; }
.ticks { display: flex; justify-content: space-between; height: 10px; margin: 0 17px 0 16px; border-bottom: 3px solid #ccc; }
.ticks span { width: 3px; background: #ccc; }
.marker { margin: -3px 0 0 -8px; }
.prefs { margin: 6px 0 0 auto; }
.desktop { flex: none; height: 4px; border-top: 2px solid #abb4ae; background: linear-gradient(90deg, #d6e5c8, #d4e6c6 30%, #c6e2e6 45%, #cfdfee); }
</style>
